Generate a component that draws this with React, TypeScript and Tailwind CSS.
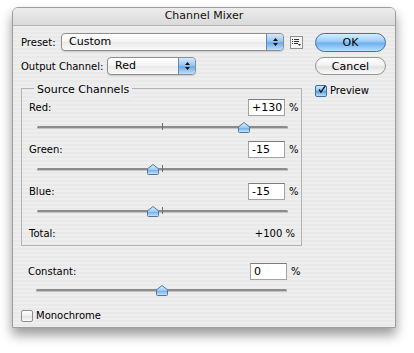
// Channel Mixer dialog (Aqua style)

const LABEL = "font-['DejaVu_Sans',sans-serif] text-[10px] text-black";

function Stepper() {
  return (
    <div className="w-[17px] h-full rounded-r-[4px] border-l border-[#5b87c4] bg-[linear-gradient(180deg,#d4e8fb_0%,#9ac8f1_45%,#6ea9e5_55%,#bfe0fb_100%)] flex flex-col items-center justify-center gap-[2px]">
      <svg width="5" height="3" viewBox="0 0 5 3">
        <path d="M2.5 0 L5 3 L0 3 Z" fill="#111" />
      </svg>
      <svg width="5" height="3" viewBox="0 0 5 3">
        <path d="M0 0 L5 0 L2.5 3 Z" fill="#111" />
      </svg>
    </div>
  );
}

function Popup({ value, width }: { value: string; width: string }) {
  return (
    <div
      className={`${width} h-[18px] flex rounded-[4px] border border-[#8e8e8e] bg-[linear-gradient(180deg,#ffffff_0%,#f4f4f4_50%,#e9e9e9_51%,#fafafa_100%)] shadow-[0_1px_1px_rgba(0,0,0,0.15)] overflow-hidden`}
    >
      <span className="flex-1 pl-[7px] font-['DejaVu_Sans',sans-serif] text-[11px] leading-[16px] text-black">
        {value}
      </span>
      <Stepper />
    </div>
  );
}

function Field({ value }: { value: string }) {
  return (
    <div className="flex items-center">
      <div className="w-[37px] h-[17px] bg-white border border-[#a2a2a2] border-t-[#7c7c7c] pl-[3px] font-['DejaVu_Sans',sans-serif] text-[11px] leading-[15px] text-black">
        {value}
      </div>
      <span className={`${LABEL} ml-[4px] w-[7px]`}>%</span>
    </div>
  );
}

function Thumb() {
  return (
    <svg width="12" height="11" viewBox="0 0 12 11">
      <defs>
        <linearGradient id="thumbGrad" x1="0" y1="0" x2="0" y2="1">
          <stop offset="0" stopColor="#e4f2ff" />
          <stop offset="0.5" stopColor="#9ccbf4" />
          <stop offset="0.55" stopColor="#6fb0ea" />
          <stop offset="1" stopColor="#cde9ff" />
        </linearGradient>
      </defs>
      <path
        d="M6 0.5 L11.5 4.8 L11.5 9.5 Q11.5 10.5 10.5 10.5 L1.5 10.5 Q0.5 10.5 0.5 9.5 L0.5 4.8 Z"
        fill="url(#thumbGrad)"
        stroke="#55759c"
      />
    </svg>
  );
}

// value -200..200
function Slider({ value, tick }: { value: number; tick?: boolean }) {
  const pct = ((value + 200) / 400) * 100;
  return (
    <div className="relative h-[24px] ml-[15px] w-[251px]">
      <div className="absolute left-0 right-0 top-[10px] h-[3px] rounded-full bg-[#8c8c8c] border-b border-[#c4c4c4]" />
      {tick && <div className="absolute left-[125px] top-[7px] w-px h-[7px] bg-[#6e6e6e]" />}
      <div className="absolute top-[6px] -ml-[6px]" style={{ left: `${pct}%` }}>
        <Thumb />
      </div>
    </div>
  );
}

function ChannelRow({ label, value, num }: { label: string; value: string; num: number }) {
  return (
    <div>
      <div className="flex items-center justify-between h-[17px] pl-[7px] pr-[5px]">
        <span className={LABEL}>{label}</span>
        <Field value={value} />
      </div>
      <Slider value={num} tick />
    </div>
  );
}

function Checkbox({ checked }: { checked?: boolean }) {
  if (checked) {
    return (
      <div className="w-[12px] h-[12px] rounded-[2px] border border-[#3e6ea8] bg-[linear-gradient(180deg,#cfe6fb_0%,#85bdf0_50%,#5aa0e2_55%,#bde0fb_100%)] flex items-center justify-center">
        <svg width="11" height="11" viewBox="0 0 11 11" className="-mt-[3px] ml-[2px]">
          <path d="M1.5 5.5 L4 9 L10 0.5" fill="none" stroke="#111" strokeWidth="1.8" />
        </svg>
      </div>
    );
  }
  return (
    <div className="w-[12px] h-[12px] rounded-[2px] border border-[#8d8d8d] bg-[linear-gradient(180deg,#ffffff_0%,#eeeeee_50%,#e4e4e4_55%,#fbfbfb_100%)]" />
  );
}

export default function App() {
  return (
    <div className="w-[414px] h-[353px] bg-white pt-[7px] pl-[12px]">
      <div className="w-[384px] h-[321px] rounded-t-[6px] border border-[#9d9d9d] shadow-[0_7px_12px_rgba(0,0,0,0.4)] overflow-hidden flex flex-col">
        {/* title bar */}
        <div className="h-[18px] flex items-center justify-center bg-[linear-gradient(180deg,#ececec_0%,#dadada_100%)] border-b border-[#b4b4b4]">
          <span className="font-['DejaVu_Sans',sans-serif] text-[11px] text-[#111]">Channel Mixer</span>
        </div>

        {/* body */}
        <div className="flex-1 flex pl-[8px] pt-[7px] bg-[repeating-linear-gradient(180deg,#eeeeee_0px,#eeeeee_2px,#e9e9e9_2px,#e9e9e9_4px)]">
          {/* left column */}
          <div className="w-[282px] flex flex-col">
            <div className="flex items-center h-[18px]">
              <span className={`${LABEL} w-[40px]`}>Preset:</span>
              <Popup value="Custom" width="w-[223px]" />
              <div className="ml-[6px] w-[13px] h-[13px] border border-[#8f8f8f] bg-[#f4f4f4] flex items-center justify-center">
                <svg width="9" height="7" viewBox="0 0 9 7">
                  <rect x="0" y="0" width="1" height="1" fill="#333" />
                  <rect x="2" y="0" width="5" height="1" fill="#333" />
                  <rect x="0" y="2" width="1" height="1" fill="#333" />
                  <rect x="2" y="2" width="5" height="1" fill="#333" />
                  <rect x="0" y="4" width="1" height="1" fill="#333" />
                  <rect x="2" y="4" width="4" height="1" fill="#333" />
                  <path d="M6 5 L9 5 L7.5 7 Z" fill="#333" />
                </svg>
              </div>
            </div>

            <div className="flex items-center h-[18px] mt-[6px]">
              <span className={`${LABEL} w-[86px]`}>Output Channel:</span>
              <Popup value="Red" width="w-[89px]" />
            </div>

            {/* group box */}
            <div className="relative mt-[13px] w-[281px] h-[158px] border border-[#b3b3b3] pt-[10px]">
              <span className={`${LABEL} absolute -top-[7px] left-[12px] px-[3px] bg-[#ececec] text-[11px]`}>
                Source Channels
              </span>
              <div className="flex flex-col">
                <ChannelRow label="Red:" value="+130" num={130} />
                <div className="h-[1px]" />
                <ChannelRow label="Green:" value="-15" num={-15} />
                <div className="h-[1px]" />
                <ChannelRow label="Blue:" value="-15" num={-15} />
              </div>
              <div className="flex items-center justify-between h-[14px] mt-[2px] pl-[7px] pr-[6px]">
                <span className={LABEL}>Total:</span>
                <span className={LABEL}>+100 %</span>
              </div>
            </div>

            <div className="mt-[17px] flex items-center justify-between h-[17px] pl-[7px] pr-[5px]">
              <span className={LABEL}>Constant:</span>
              <Field value="0" />
            </div>
            <div className="-mt-[1px]">
              <Slider value={0} />
            </div>

            <div className="mt-[5px] flex items-center gap-[3px]">
              <Checkbox />
              <span className={LABEL}>Monochrome</span>
            </div>
          </div>

          {/* right column */}
          <div className="ml-[12px] w-[71px] flex flex-col">
            <button className="h-[19px] rounded-full border border-[#3f6fb5] bg-[linear-gradient(180deg,#d9ecfd_0%,#a4d0f7_40%,#6fb1ef_55%,#b9e0ff_100%)] font-['DejaVu_Sans',sans-serif] text-[11px] text-black leading-none">
              OK
            </button>
            <button className="mt-[5px] h-[18px] rounded-full border border-[#939393] bg-[linear-gradient(180deg,#ffffff_0%,#f2f2f2_45%,#e2e2e2_55%,#fbfbfb_100%)] font-['DejaVu_Sans',sans-serif] text-[11px] text-black leading-none">
              Cancel
            </button>
            <div className="mt-[8px] flex items-center gap-[3px]">
              <Checkbox checked />
              <span className={LABEL}>Preview</span>
            </div>
          </div>
        </div>
      </div>
    </div>
  );
}
